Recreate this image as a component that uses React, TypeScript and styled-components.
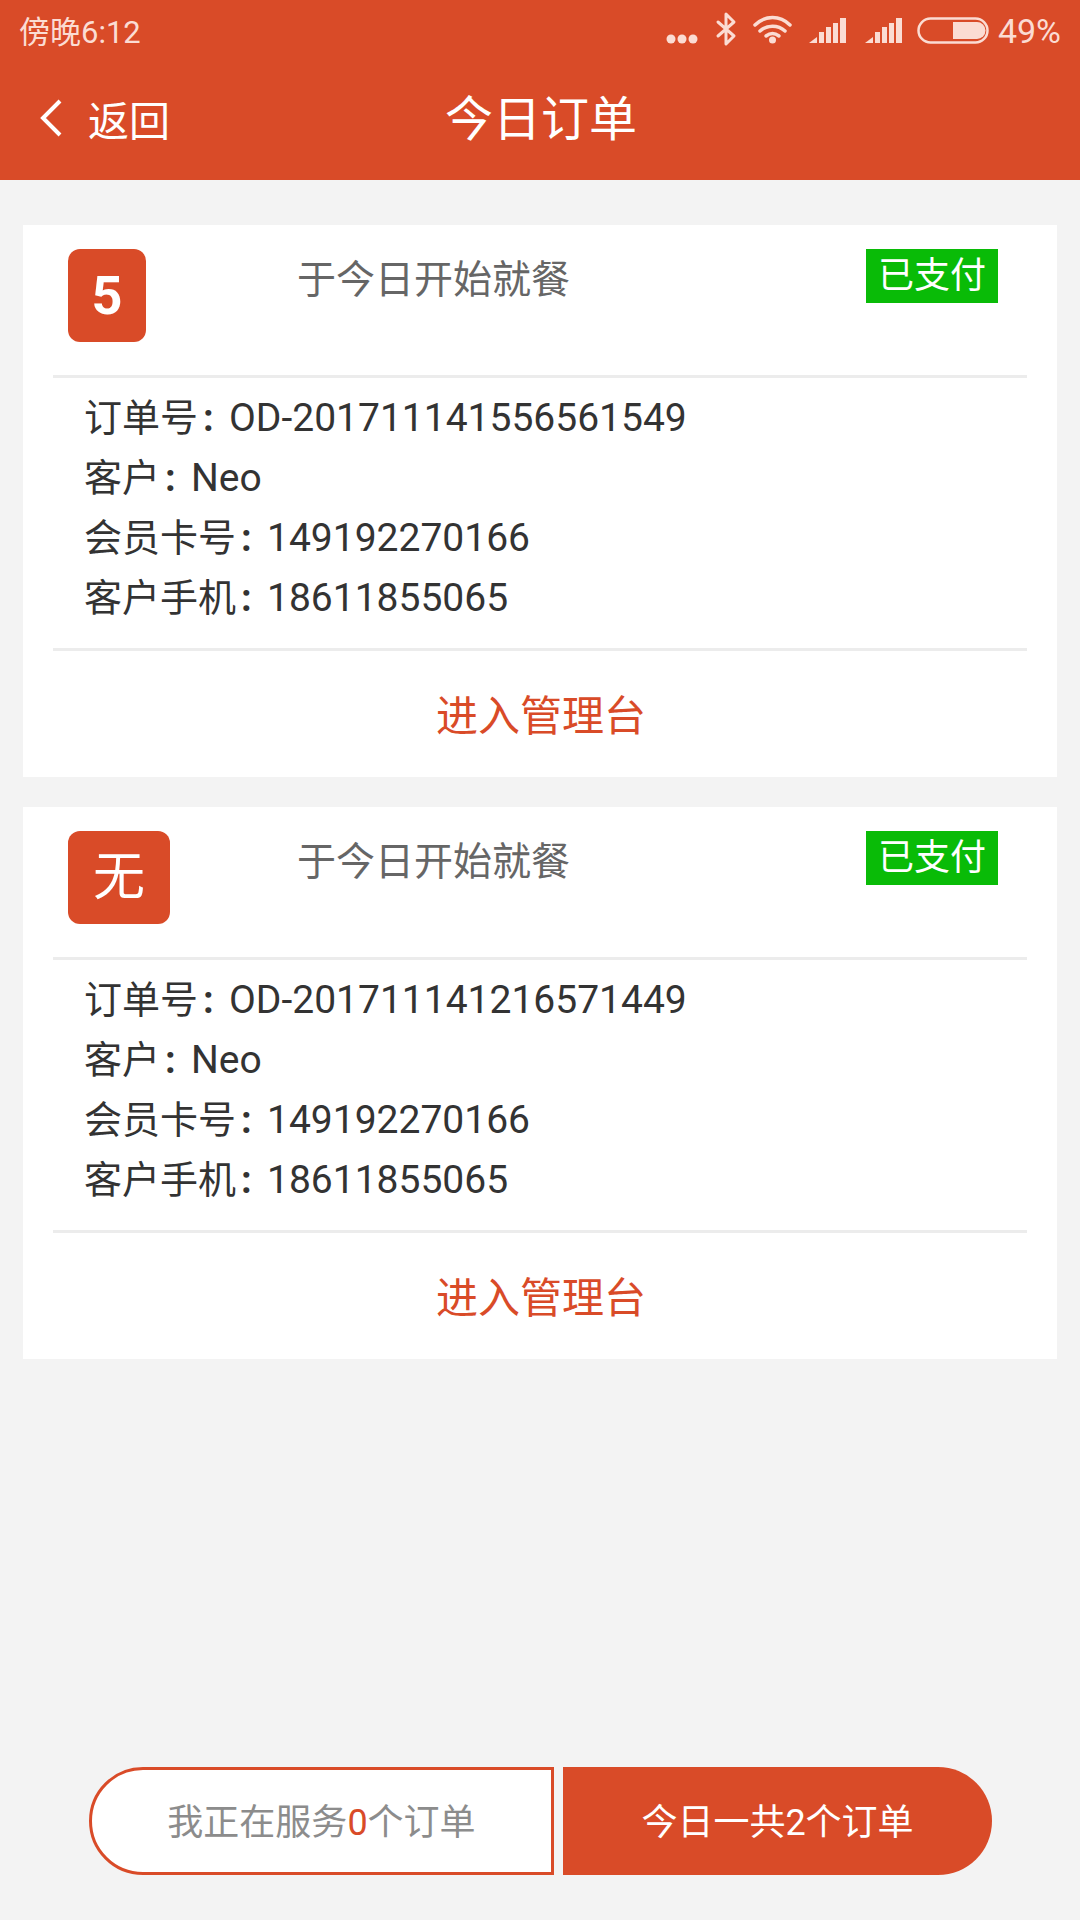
import styled, { createGlobalStyle } from 'styled-components';

const ORANGE = '#d94b28';

const GlobalStyle = createGlobalStyle`
  html, body {
    margin: 0;
    padding: 0;
    background: #f3f3f3;
  }
  body {
    font-family: Roboto, "Noto Sans CJK SC", sans-serif;
  }
`;

const Page = styled.div`
  width: 1080px;
  height: 1920px;
  display: flex;
  flex-direction: column;
  background: #f3f3f3;
  overflow: hidden;
`;

const Header = styled.header`
  height: 180px;
  flex: none;
  background: ${ORANGE};
  color: #fff;
`;

const StatusBar = styled.div`
  height: 60px;
  display: flex;
  justify-content: space-between;
  align-items: center;
  padding: 0 19px;
  color: #fbdcd3;
  font-size: 31px;
`;

const StatusTime = styled.span`
  margin-bottom: 2px;
`;

const StatusIcons = styled.div`
  display: flex;
  align-items: center;
`;

const BatteryText = styled.span`
  font-size: 34px;
  margin: 2px 0 0 2px;
`;

const NavBar = styled.div`
  height: 120px;
  box-sizing: border-box;
  padding-bottom: 4px;
  display: grid;
  grid-template-columns: 1fr auto 1fr;
  align-items: center;
`;

const BackLink = styled.div`
  display: flex;
  align-items: center;
  padding-left: 38px;
  font-size: 41px;
  gap: 25px;
`;

const Title = styled.h1`
  margin: 0 0 6px 2px;
  font-size: 48px;
  font-weight: 400;
`;

const Orders = styled.main`
  display: flex;
  flex-direction: column;
  gap: 30px;
  padding: 45px 23px 0;
`;

const Card = styled.section`
  height: 552px;
  background: #fff;
  display: flex;
  flex-direction: column;
`;

const CardTop = styled.div`
  height: 150px;
  flex: none;
  padding: 24px 42px 0 45px;
  box-sizing: border-box;
  position: relative;
  display: flex;
  align-items: flex-start;
`;

const Badge = styled.div<{ $wide?: boolean }>`
  width: ${(p) => (p.$wide ? '102px' : '78px')};
  height: 93px;
  box-sizing: border-box;
  padding-bottom: ${(p) => (p.$wide ? '10px' : '0')};
  border-radius: 12px;
  background: ${ORANGE};
  color: #fff;
  display: flex;
  align-items: center;
  justify-content: center;
  font-size: ${(p) => (p.$wide ? '52px' : '54px')};
  font-weight: ${(p) => (p.$wide ? 400 : 700)};
`;

const Arrival = styled.div`
  position: absolute;
  left: 274px;
  top: 30px;
  font-size: 39px;
  line-height: 50px;
  color: #666;
`;

const PaidTag = styled.div`
  position: absolute;
  right: 59px;
  top: 24px;
  width: 132px;
  height: 54px;
  background: #09bb07;
  color: #fff;
  font-size: 36px;
  line-height: 54px;
  text-align: center;
`;

const Divider = styled.hr`
  flex: none;
  height: 3px;
  margin: 0 30px;
  border: 0;
  background: #ececec;
`;

const Details = styled.div`
  height: 270px;
  flex: none;
  box-sizing: border-box;
  padding: 10px 0 0 61px;
  color: #333;
  font-size: 38px;
  line-height: 60px;
`;

const DetailRow = styled.div`
  height: 60px;
  white-space: nowrap;
`;

const Colon = styled.span`
  display: inline-block;
  width: 31px;
  padding-left: 5px;
  box-sizing: border-box;
  font-weight: 700;
`;

const DetailValue = styled.span`
  font-size: 39px;
`;

const Action = styled.div`
  flex: 1;
  box-sizing: border-box;
  padding: 0 0 4px 2px;
  display: flex;
  align-items: center;
  justify-content: center;
  color: ${ORANGE};
  font-size: 42px;
`;

const Footer = styled.footer`
  margin-top: auto;
  padding: 0 88px 45px 89px;
  display: flex;
  gap: 9px;
`;

const FooterButton = styled.div<{ $filled?: boolean }>`
  height: 108px;
  box-sizing: border-box;
  padding-bottom: 4px;
  display: flex;
  align-items: center;
  justify-content: center;
  font-size: 36px;
  ${(p) =>
    p.$filled
      ? `
    width: 429px;
    background: ${ORANGE};
    color: #fff;
    border-radius: 0 54px 54px 0;
  `
      : `
    width: 465px;
    background: #fff;
    color: #8c8c8c;
    border: 3px solid ${ORANGE};
    border-radius: 54px 0 0 54px;
  `}
`;

const Count = styled.b`
  color: ${ORANGE};
  font-weight: 400;
`;

const orders = [
  { badge: '5', no: 'OD-201711141556561549' },
  { badge: '无', no: 'OD-201711141216571449', wide: true },
];

function StatusGlyphs() {
  return (
    <svg width="330" height="60" viewBox="666 0 330 60" fill="none">
      <g fill="#fbdcd3">
        <circle cx="671" cy="39" r="4.5" />
        <circle cx="682" cy="39" r="4.5" />
        <circle cx="693" cy="39" r="4.5" />
      </g>
      <path
        d="M718 22l16 14-8 8V14l8 8-16 14"
        stroke="#fbdcd3"
        strokeWidth="3"
        strokeLinecap="round"
        strokeLinejoin="round"
      />
      <g stroke="#fbdcd3" strokeWidth="3.5" strokeLinecap="round">
        <path d="M755 25c10-10 25-10 35 0" />
        <path d="M760 31c7-6.500 18-6.500 25 0" />
        <path d="M766 36c4-3 9-3 13 0" />
      </g>
      <circle cx="772.500" cy="40" r="3.500" fill="#fbdcd3" />
      {[809, 865].map((x) => (
        <g key={x} fill="#fbdcd3">
          <path d={`M${x} 43l8-6v6z`} />
          <rect x={x + 10} y="32" width="5" height="11" />
          <rect x={x + 17} y="27" width="5" height="16" />
          <rect x={x + 24} y="23" width="5" height="20" />
          <rect x={x + 31} y="18" width="6" height="25" />
        </g>
      ))}
      <rect x="918.500" y="18.500" width="69" height="24" rx="12" stroke="#fbdcd3" strokeWidth="2.500" />
      <path d="M953 22h24a8.500 8.500 0 0 1 0 17h-24z" fill="#fbdcd3" />
    </svg>
  );
}

function BackArrow() {
  return (
    <svg width="25" height="40" viewBox="0 0 25 40" fill="none">
      <path d="M22 3L5 20l17 17" stroke="#fff" strokeWidth="4" />
    </svg>
  );
}

export default function App() {
  return (
    <Page>
      <GlobalStyle />
      <Header>
        <StatusBar>
          <StatusTime>傍晚6:12</StatusTime>
          <StatusIcons>
            <StatusGlyphs />
            <BatteryText>49%</BatteryText>
          </StatusIcons>
        </StatusBar>
        <NavBar>
          <BackLink>
            <BackArrow />
            <span>返回</span>
          </BackLink>
          <Title>今日订单</Title>
        </NavBar>
      </Header>
      <Orders>
        {orders.map((order) => (
          <Card key={order.no}>
            <CardTop>
              <Badge $wide={order.wide}>{order.badge}</Badge>
              <Arrival>于今日开始就餐</Arrival>
              <PaidTag>已支付</PaidTag>
            </CardTop>
            <Divider />
            <Details>
              <DetailRow>
                订单号<Colon>:</Colon>
                <DetailValue>{order.no}</DetailValue>
              </DetailRow>
              <DetailRow>
                客户<Colon>:</Colon>
                <DetailValue>Neo</DetailValue>
              </DetailRow>
              <DetailRow>
                会员卡号<Colon>:</Colon>
                <DetailValue>149192270166</DetailValue>
              </DetailRow>
              <DetailRow>
                客户手机<Colon>:</Colon>
                <DetailValue>18611855065</DetailValue>
              </DetailRow>
            </Details>
            <Divider />
            <Action>进入管理台</Action>
          </Card>
        ))}
      </Orders>
      <Footer>
        <FooterButton>
          <span>
            我正在服务<Count>0</Count>个订单
          </span>
        </FooterButton>
        <FooterButton $filled>今日一共2个订单</FooterButton>
      </Footer>
    </Page>
  );
}
